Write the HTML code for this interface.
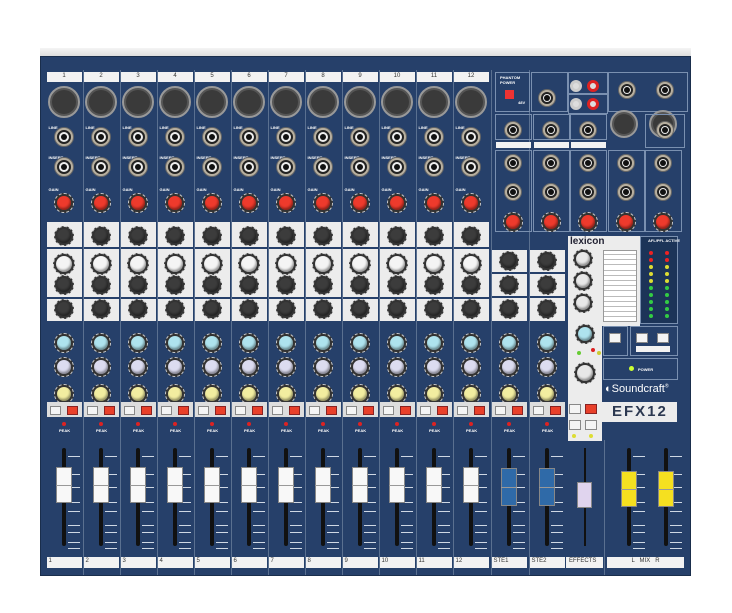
<!DOCTYPE html>
<html><head><meta charset="utf-8"><style>
*{margin:0;padding:0;box-sizing:border-box}
body{width:732px;height:613px;background:#fff;position:relative;overflow:hidden;font-family:"Liberation Sans",sans-serif}
.a{position:absolute}
.k{position:absolute;border-radius:50%}
.t{position:absolute;font-size:4px;color:#fff;font-weight:bold}
</style></head><body>
<div class="a" style="left:40px;top:48px;width:651px;height:10px;background:linear-gradient(#f4f4f4,#d8d8d8)"></div>
<div class="a" style="left:40px;top:56px;width:651px;height:520px;background:#26406a;border:1px solid #1a2e4c"></div>
<div id="m"></div>
<script>
var h='';
function d(x,y,w,hh,st){h+='<div class="a" style="left:'+x+'px;top:'+y+'px;width:'+w+'px;height:'+hh+'px;'+(st||'')+'"></div>';}
function knob(cx,cy,r,c){h+='<div class="k" style="left:'+(cx-r-3)+'px;top:'+(cy-r-3)+'px;width:'+(2*r+6)+'px;height:'+(2*r+6)+'px;background:#333;border:1px dashed #ccc"></div>';h+='<div class="k" style="left:'+(cx-r)+'px;top:'+(cy-r)+'px;width:'+(2*r)+'px;height:'+(2*r)+'px;background:'+c+';box-shadow:inset -1px -2px 2px rgba(0,0,0,.4)"></div>';}
function jack(cx,cy,r){h+='<div class="k" style="left:'+(cx-r)+'px;top:'+(cy-r)+'px;width:'+(2*r)+'px;height:'+(2*r)+'px;background:#b8b0a0;border:1px solid #666"></div><div class="k" style="left:'+(cx-r+3)+'px;top:'+(cy-r+3)+'px;width:'+(2*r-6)+'px;height:'+(2*r-6)+'px;background:#eee;border:2px solid #222"></div><div class="k" style="left:'+(cx-3)+'px;top:'+(cy-3)+'px;width:6px;height:6px;background:#111"></div>';}
function xlr(cx,cy,r){h+='<div class="k" style="left:'+(cx-r)+'px;top:'+(cy-r)+'px;width:'+(2*r)+'px;height:'+(2*r)+'px;background:#555;border:2px solid #999"></div><div class="k" style="left:'+(cx-r+4)+'px;top:'+(cy-r+4)+'px;width:'+(2*r-8)+'px;height:'+(2*r-8)+'px;background:#3a3a3a"></div>';}
function fader(cx,cap){d(cx-2,448,4,98,'background:#111;border-radius:2px');for(var j=0;j<9;j++){var y=[456,474,487,502,511,525,532,542,548][j];d(cx+4,y,12,1,'background:#cfd8e4');}
 d(cx-8,cap[1],16,cap[2],'background:'+cap[0]+';border:1px solid #888');d(cx-8,cap[1]+cap[2]/2,16,1,'background:#999');}
for(var i=0;i<12;i++){
 var cx=64+37*i,x0=cx-18.5;
 if(i>0)d(x0,70,1,505,'background:#5a7090');
 d(x0+1,72,35,10,'background:#f2f2f2');h+='<div class="a" style="left:'+(x0+1)+'px;top:73px;width:35px;text-align:center;font-size:6px;color:#333">'+(i+1)+'</div>';
 xlr(cx,102,16);
 h+='<div class="t" style="left:'+(x0+3)+'px;top:125px">LINE</div><div class="t" style="left:'+(x0+3)+'px;top:155px">INSERT</div><div class="t" style="left:'+(x0+3)+'px;top:187px">GAIN</div>';
 jack(cx,137,10);jack(cx,167,10);knob(cx,203,7,'#ee3a2c');
 d(x0+1,222,35,25,'background:#ececec');d(x0+1,249,35,48,'background:#ececec');d(x0+1,299,35,22,'background:#ececec');
 knob(cx,236,7,'#3c3c3c');knob(cx,264,8,'#f4f4f4');knob(cx,285,7,'#3c3c3c');knob(cx,309,7,'#3c3c3c');
 knob(cx,343,7,'#aee3ee');knob(cx,367,7,'#dcdcf0');knob(cx,394,7,'#f2eda0');
 d(x0+1,402,35,15,'background:#ddd');d(x0+4,406,11,9,'background:#f4f4f4;border:1px solid #888');d(x0+21,406,11,9,'background:#e8402a;border:1px solid #822');
 d(cx-2,422,4,4,'background:#d22;border-radius:50%');h+='<div class="t" style="left:'+(cx-5)+'px;top:428px">PEAK</div>';
 fader(cx,['#f8f8f8',467,36]);
 d(x0+1,557,35,11,'background:#f2f2f2');h+='<div class="a" style="left:'+(x0+3)+'px;top:558px;font-size:6px;color:#333">'+(i+1)+'</div>';
}
var sx=[509,547];
for(var s=0;s<2;s++){var cx=sx[s],x0=cx-18.5;d(x0,70,1,505,'background:#5a7090');
 d(x0+1,250,35,22,'background:#ececec');d(x0+1,274,35,22,'background:#ececec');d(x0+1,298,35,23,'background:#ececec');
 knob(cx,261,7,'#3c3c3c');knob(cx,285,7,'#3c3c3c');knob(cx,309,7,'#3c3c3c');
 knob(cx,343,7,'#aee3ee');knob(cx,367,7,'#dcdcf0');knob(cx,394,7,'#f2eda0');
 d(x0+1,402,35,15,'background:#ddd');d(x0+4,406,11,9,'background:#f4f4f4;border:1px solid #888');d(x0+21,406,11,9,'background:#e8402a;border:1px solid #822');
 d(cx-2,422,4,4,'background:#d22;border-radius:50%');h+='<div class="t" style="left:'+(cx-5)+'px;top:428px">PEAK</div>';
 fader(cx,['#2f6aa8',468,38]);
 d(x0+1,557,35,11,'background:#f2f2f2');h+='<div class="a" style="left:'+(x0+3)+'px;top:558px;font-size:6px;color:#333">STE'+(s+1)+'</div>';}
// top right
d(495,72,35,40,'border:1px solid #7a90b0');d(505,90,9,9,'background:#e33');h+='<div class="t" style="left:500px;top:75px">PHANTOM<br>POWER</div><div class="t" style="left:518px;top:100px">48V</div>';
d(531,72,37,40,'border:1px solid #7a90b0');jack(547,98,9);
d(568,72,40,22,'border:1px solid #7a90b0');d(568,94,40,20,'border:1px solid #7a90b0');
[[576,86],[593,86],[576,104],[593,104]].forEach(function(p,j){h+='<div class="k" style="left:'+(p[0]-6)+'px;top:'+(p[1]-6)+'px;width:12px;height:12px;background:#ddd;border:3px solid '+(j%2?'#d22':'#ccc')+'"></div>';});
d(608,72,80,40,'border:1px solid #7a90b0');jack(627,90,9);jack(665,90,9);xlr(624,124,14);xlr(663,124,14);
for(var j=0;j<5;j++){var x=495+37.5*j;if(j<3){d(x,114,37,26,'border:1px solid #7a90b0');jack(x+18,130,9);d(x+1,142,35,6,'background:#f2f2f2');}
 d(x,150,37,82,'border:1px solid #7a90b0');jack(x+18,163,9);jack(x+18,192,9);knob(x+18,222,7,'#ee3a2c');}
d(645,114,40,34,'border:1px solid #7a90b0');jack(665,130,9);
// lexicon panel
d(568,236,72,90,'background:#ececec');d(568,325,34,116,'background:#ececec');
h+='<div class="a" style="left:570px;top:236px;font-size:10px;font-weight:bold;color:#223">lexicon</div>';
d(603,250,34,72,'background:#fff;border:1px solid #999');for(var j=0;j<13;j++)d(604,254+j*5.2,32,1,'background:#bbb');
knob(583,259,7,'#e8e8e8');knob(583,281,7,'#e8e8e8');knob(583,303,7,'#e8e8e8');knob(585,334,7,'#aee3ee');knob(585,373,8,'#e8e8e8');
d(577,351,4,4,'background:#6c3;border-radius:50%');d(591,348,4,4,'background:#d22;border-radius:50%');d(597,351,4,4,'background:#cc3;border-radius:50%');
d(569,404,12,10,'background:#f4f4f4;border:1px solid #888');d(585,404,12,10,'background:#e8402a;border:1px solid #822');
d(569,420,12,10,'background:#f4f4f4;border:1px solid #888');d(585,420,12,10,'background:#f4f4f4;border:1px solid #888');
d(572,434,4,4,'background:#dd3;border-radius:50%');d(589,434,4,4,'background:#dd3;border-radius:50%');
// meter
d(640,236,38,88,'border:1px solid #7a90b0;background:#1c3458');
var mc=['#e22','#e22','#dd3','#dd3','#dd3','#3c4','#3c4','#3c4','#3c4','#3c4'];
for(var j=0;j<10;j++){d(649,251+j*7,4,4,'background:'+mc[j]+';border-radius:50%');d(665,251+j*7,4,4,'background:'+mc[j]+';border-radius:50%');}
h+='<div class="t" style="left:648px;top:238px">AFL/PFL ACTIVE</div>';
d(603,326,25,30,'border:1px solid #7a90b0');d(609,333,12,10,'background:#f4f4f4;border:1px solid #888');
d(630,326,48,30,'border:1px solid #7a90b0');d(636,333,12,10,'background:#f4f4f4;border:1px solid #888');d(657,333,12,10,'background:#f4f4f4;border:1px solid #888');d(636,346,34,6,'background:#f2f2f2');
d(603,358,75,22,'border:1px solid #7a90b0');d(629,366,5,5,'background:#cf3;border-radius:50%');h+='<div class="t" style="left:638px;top:367px">POWER</div>';
h+='<div class="a" style="left:605px;top:383px;font-size:11px;color:#fff;white-space:nowrap">&#9680;Soundcraft<sup style="font-size:5px">®</sup></div>';
d(602,402,75,20,'background:#ececec');h+='<div class="a" style="left:612px;top:403px;font-size:15px;font-weight:bold;color:#2c3850;letter-spacing:2px">EFX12</div>';
d(584,448,2,98,'background:#111');d(584-7,482,15,26,'background:#e0d4ee;border:1px solid #888');
d(566,557,37,11,'background:#f2f2f2');h+='<div class="a" style="left:569px;top:558px;font-size:6px;color:#333">EFFECTS</div>';
d(604,440,1,135,'background:#5a7090');
[629,666].forEach(function(cx){fader(cx,['#f5e020',471,36]);});
d(607,557,77,11,'background:#f2f2f2');h+='<div class="a" style="left:607px;top:558px;width:77px;text-align:center;font-size:6px;color:#333">L &nbsp; MIX &nbsp; R</div>';
document.getElementById('m').innerHTML=h;
</script>
</body></html>
